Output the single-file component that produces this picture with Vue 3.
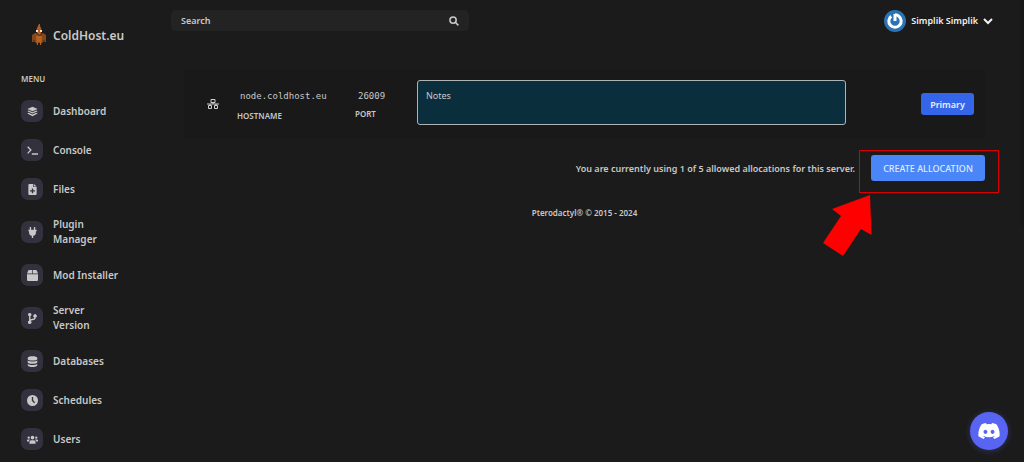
<script setup>
import { ref } from 'vue'

const search = ref('')
const notes = ref('')

const menu = [
  { label: 'Dashboard', icon: 'M8 1 15.5 4.4 8 7.8.5 4.4zM2.4 6.6 8 9.2l5.6-2.6 1.9.9L8 11 .5 7.5zM2.4 9.9 8 12.5l5.6-2.6 1.9.9L8 14.9.5 10.8z' },
  { label: 'Console', icon: 'M.3 3.2 1.7 1.8 7 7.3 1.7 12.9.3 11.5l4-4.2zM7 12h9v2H7z' },
  { label: 'Files', icon: 'M2 1.5Q2 0 3.5 0H9v4.5h5v10q0 1.500-1.500 1.500h-9Q2 16 2 14.500zM10 0l4 3.700h-4zM7 6.500V9H4.500v2H7v2.500h2V11h2.500V9H9V6.500z' },
  { label: 'Plugin Manager', icon: 'M4 0h2v4h4V0h2v4h2v2h-1v2q0 4-4 4.900V16H7v-3.100Q3 12 3 8V6H2V4h2z' },
  { label: 'Mod Installer', icon: 'M3 0h4.500v5H0l1.600-4Q2 0 3 0zm5.500 0H13q1 0 1.400 1L16 5H8.500zM0 6h16v8.500q0 1.500-1.500 1.500h-13Q0 16 0 14.500z' },
  { label: 'Server Version', icon: 'M4 0a2.500 2.500 0 0 1 1 4.800v4.400q1-.7 3-.7 2.500 0 2.700-1.800a2.500 2.500 0 1 1 2 0Q12.500 10.500 8 10.500q-2.500 0-2.800.9A2.500 2.500 0 1 1 3 11.200V4.800A2.500 2.500 0 0 1 4 0z' },
  { label: 'Databases', icon: 'M1 3C1-.7 15-.7 15 3v1.300c0 3-14 3-14 0zM1 6.600c3 2.100 11 2.100 14 0v2.600c0 3-14 3-14 0zM1 11.500c3 2.100 11 2.100 14 0V13c0 4-14 4-14 0z' },
  { label: 'Schedules', icon: 'M8 0a8 8 0 1 0 0 16A8 8 0 0 0 8 0zM7 3h2v4.700l2.800 2.800-1.400 1.400L7 8.500z' },
  { label: 'Users', icon: 'M8 2.500a2.700 2.700 0 1 1 0 5.400 2.700 2.700 0 0 1 0-5.400zM2.500 3.500a1.700 1.700 0 1 1 0 3.400 1.700 1.700 0 0 1 0-3.400zm11 0a1.700 1.700 0 1 1 0 3.400 1.700 1.700 0 0 1 0-3.400zM3.500 14v-2q0-3 3-3h3q3 0 3 3v2zM0 11V9.500Q0 8 1.500 8h2q.8 0 1 .4Q3 9.300 2.700 11zm16 0V9.500Q16 8 14.500 8h-2q-.8 0-1 .4 1.500.9 1.800 2.600z' },
]
</script>

<template>
  <div class="page">
    <aside class="sidebar">
      <a class="brand" href="#">
        <svg class="mascot" viewBox="0 0 14 22" aria-hidden="true">
          <path fill="#b85b20" d="M7 0h1v2l1 2 1 4H4l1-4 1-2z" />
          <path fill="#89461a" d="M3 9h8l3 2v7h-3l-1 1H4l-1-1H0v-7z" />
          <path fill="#b76223" d="M5 8h4v3l1 2-1 8H8v-3H6v3H5l-1-8 1-2z" />
          <path fill="#5c3a1d" d="M4 9h2l1 2 2-2h2l-2 3H6zM1 16h2v2H1zM11 16h2v2h-2z" />
          <path fill="#f2e5d9" d="M4 6h2v2H4zM8 6h2v2H8z" />
        </svg>
        <span>ColdHost.eu</span>
      </a>
      <h2 class="menu-title">MENU</h2>
      <nav class="menu">
        <a v-for="item in menu" :key="item.label" class="item" href="#">
          <span class="tile">
            <svg viewBox="0 0 16 16" aria-hidden="true"><path fill-rule="evenodd" :d="item.icon" /></svg>
          </span>
          <span class="item-label">{{ item.label }}</span>
        </a>
      </nav>
    </aside>

    <div class="main">
      <header class="top">
        <label class="search">
          <input v-model="search" type="text" placeholder="Search" aria-label="Search" />
          <svg viewBox="0 0 16 16" aria-hidden="true"><circle cx="6.500" cy="6.500" r="5" /><path d="m10.500 10.500 4.500 4.500" /></svg>
        </label>
        <button class="user" type="button">
          <svg class="avatar" viewBox="0 0 22 22" aria-hidden="true">
            <circle cx="11" cy="11" r="11" fill="#2a73b5" />
            <path d="M7.200 6.200a6.200 6.200 0 1 0 7.600 0M11 4v7" fill="none" stroke="#fff" stroke-width="3" />
            <path d="M11 4.700a6.300 6.300 0 0 1 4 1.700" fill="none" stroke="#fff" stroke-width="3" />
          </svg>
          <span>Simplik Simplik</span>
          <svg class="chevron" viewBox="0 0 10 10" aria-hidden="true"><path d="m1 3 4 4 4-4" /></svg>
        </button>
      </header>

      <main class="content">
        <section class="card">
          <svg class="network" viewBox="0 0 12 10" aria-hidden="true">
            <path d="M4 .5h4v3H4zM1.500 6.500h3v3h-3zM7.500 6.500h3v3h-3zM6 3.500V5M0 5h12M3 5v1.500M9 5v1.500" />
          </svg>
          <dl class="field host"><dd>node.coldhost.eu</dd><dt>HOSTNAME</dt></dl>
          <dl class="field port"><dd>26009</dd><dt>PORT</dt></dl>
          <textarea v-model="notes" class="notes" placeholder="Notes" aria-label="Notes"></textarea>
          <button class="primary" type="button">Primary</button>
        </section>
        <div class="actions">
          <p>You are currently using 1 of 5 allowed allocations for this server.</p>
          <div class="create-wrap">
            <button class="create" type="button">CREATE ALLOCATION</button>
            <span class="highlight"></span>
            <svg class="arrow" viewBox="0 0 50 64" aria-hidden="true"><path fill="#f00" d="M47 1 48.500 41 38 35 20 62 0 49 18 22 9 15z" /></svg>
          </div>
        </div>
        <footer>Pterodactyl® © 2015 - 2024</footer>
      </main>
    </div>

    <button class="discord" type="button" aria-label="Discord">
      <svg viewBox="0 0 24 18" aria-hidden="true">
        <path fill="#fff" fill-rule="evenodd" d="M20.300 1.500A20 20 0 0 0 15.400 0l-.7 1.300a18.500 18.500 0 0 0-5.400 0L8.600 0a20 20 0 0 0-4.900 1.500C.6 6.100-.3 10.600.1 15a20 20 0 0 0 6 3l1.300-2-2-1 .5-.4a14.300 14.300 0 0 0 12.200 0l.5.4-2 1 1.300 2a20 20 0 0 0 6-3c.5-5.100-.8-9.600-3.600-13.500zM8 12.300c-1.200 0-2.200-1.100-2.200-2.400S6.800 7.500 8 7.500s2.200 1.100 2.200 2.400-1 2.400-2.200 2.400zm8 0c-1.200 0-2.200-1.100-2.200-2.400s1-2.400 2.200-2.400 2.200 1.100 2.200 2.400-1 2.400-2.200 2.400z" />
      </svg>
    </button>
    <span class="scroll-thumb"></span>
  </div>
</template>

<style>
body {
  background: #1b1b1b;
}
</style>

<style scoped>
.page {
  position: relative;
  display: grid;
  grid-template-columns: 171px minmax(0, 1fr);
  min-height: 100vh;
  overflow: hidden;
  background: #1b1b1b;
  color: #c8c8c8;
  font-family: "Noto Sans", "Open Sans", sans-serif;
  font-size: 9px;
  font-weight: 600;
}
.page * {
  box-sizing: border-box;
}
button, input, textarea {
  font: inherit;
  color: inherit;
  border: 0;
  margin: 0;
}
button {
  cursor: pointer;
}
a {
  color: inherit;
  text-decoration: none;
}
.sidebar {
  padding: 24px 21px 12px;
}
.brand {
  display: flex;
  align-items: center;
  gap: 7px;
  height: 22px;
  padding-left: 11px;
  font-size: 12px;
  white-space: nowrap;
}
.mascot {
  width: 14px;
  height: 22px;
}
.menu-title {
  margin: 26px 0 15px;
  font-size: 8px;
  font-weight: 600;
  line-height: 13px;
}
.menu {
  display: flex;
  flex-direction: column;
  gap: 17px;
}
.item {
  display: flex;
  align-items: center;
  gap: 10px;
  font-size: 10px;
  line-height: 15px;
}
.tile {
  display: grid;
  place-items: center;
  flex: none;
  width: 22px;
  height: 22px;
  border-radius: 7px;
  background: #33313e;
}
.tile svg {
  width: 11px;
  height: 11px;
  fill: #c8c8c8;
}
.item-label {
  max-width: 69px;
}
.top {
  display: flex;
  justify-content: space-between;
  align-items: center;
  padding: 10px 31px 0 0;
  height: 31px;
}
.search {
  display: flex;
  align-items: center;
  width: 298px;
  height: 21px;
  padding: 0 10px;
  border-radius: 5px;
  background: #232323;
}
.search input {
  flex: 1;
  min-width: 0;
  padding: 0;
  background: none;
  outline: 0;
}
.search input::placeholder,
.notes::placeholder {
  color: #c8c8c8;
  opacity: 1;
}
.search svg {
  width: 10px;
  height: 10px;
  fill: none;
  stroke: #c8c8c8;
  stroke-width: 2.500;
}
.user {
  display: flex;
  align-items: center;
  gap: 5px;
  padding: 0;
  background: none;
  color: #f1f1f1;
}
.avatar {
  width: 22px;
  height: 22px;
}
.chevron {
  width: 10px;
  height: 10px;
  fill: none;
  stroke: #f1f1f1;
  stroke-width: 2;
}
.content {
  padding: 38px 39px 0 13px;
}
.card {
  display: flex;
  align-items: center;
  height: 70px;
  padding: 0 11px 0 23px;
  border-radius: 3px;
  background: #191919;
}
.network {
  flex: none;
  width: 12px;
  height: 10px;
  fill: none;
  stroke: #d0d0d0;
}
.field {
  flex: none;
  margin: 0;
}
.field dd {
  margin: 0;
  padding-left: 3px;
  font: 9px/12px "DejaVu Sans Mono", monospace;
}
.field dt {
  margin-top: 8px;
  font-size: 8px;
  line-height: 12px;
}
.host {
  width: 118px;
  margin-left: 18px;
  padding-top: 4px;
}
.port {
  width: 62px;
  padding-top: 2px;
}
.port dt {
  margin-top: 6px;
}
.notes {
  flex: 1;
  min-width: 0;
  height: 45px;
  margin-bottom: 4px;
  padding: 8px;
  border: 1px solid #aeb4b6;
  border-radius: 3px;
  background: #0b2e3c;
  font-weight: 400;
  line-height: 14px;
  resize: none;
  outline: 0;
}
.primary {
  width: 53px;
  height: 22px;
  margin-left: 75px;
  padding: 0;
  border-radius: 3px;
  background: #3566ea;
  color: #e8eeff;
}
.actions {
  display: flex;
  justify-content: flex-end;
  align-items: center;
  gap: 16px;
  margin-top: 16px;
}
.actions p {
  margin: 0;
}
.create-wrap {
  position: relative;
}
.create {
  display: block;
  width: 114px;
  height: 26px;
  padding: 0;
  border-radius: 3px;
  background: #4a86f7;
  color: #dfeaff;
  font-weight: 500;
}
.highlight {
  position: absolute;
  inset: -5px -14px -12px -12px;
  border: 1px solid #d90000;
  pointer-events: none;
}
.arrow {
  position: absolute;
  top: 39px;
  left: -48px;
  width: 50px;
  height: 64px;
  pointer-events: none;
}
footer {
  margin-top: 26px;
  font-size: 8px;
  line-height: 12px;
  text-align: center;
}
.discord {
  position: absolute;
  right: 16px;
  bottom: 12px;
  display: grid;
  place-items: center;
  width: 38px;
  height: 38px;
  padding: 0;
  border-radius: 50%;
  background: #5865f2;
  box-shadow: 0 1px 6px #5865f255;
}
.discord svg {
  width: 22px;
  height: 16px;
}
.scroll-thumb {
  position: absolute;
  top: 0;
  right: 0;
  width: 3px;
  height: 227px;
  background: #171717;
}
</style>
